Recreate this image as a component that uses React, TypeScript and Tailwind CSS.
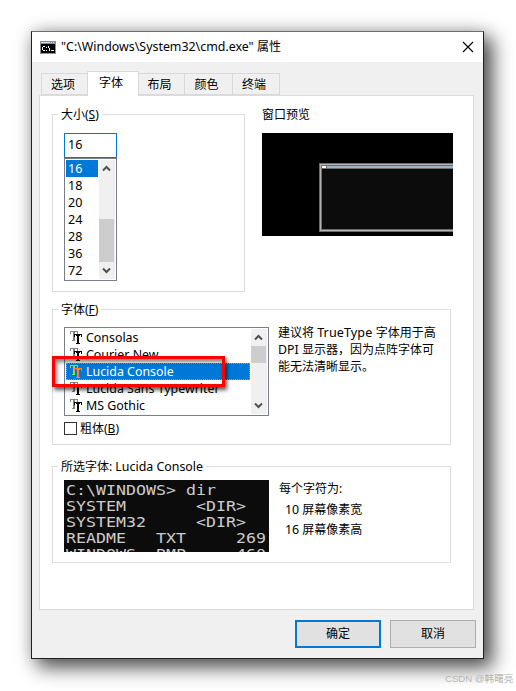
import type { ReactNode } from "react";

function Legend({ children }: { children: ReactNode }) {
  return (
    <div className="absolute left-[5px] -top-[9px] h-[18px] whitespace-nowrap bg-white px-[3px] leading-[18px]">
      {children}
    </div>
  );
}

function Latin({ children }: { children: ReactNode }) {
  return <span className="text-[12.4px]">{children}</span>;
}

function Chevron({ down = false }: { down?: boolean }) {
  return (
    <svg className="h-[17px] w-4 shrink-0" viewBox="0 0 16 17" fill="none" stroke="#505050" strokeWidth="2">
      <path d={down ? "M4 6.5 L7.5 10 L11 6.5" : "M4 10.5 L7.5 7 L11 10.5"} />
    </svg>
  );
}

function TrueTypeIcon({ selected = false }: { selected?: boolean }) {
  return (
    <svg className="h-[13px] w-3 shrink-0" viewBox="0 0 12 13" fill="none" shapeRendering="crispEdges">
      <path d="M0 0.5H8M0.5 0V3M7.5 0V3M3.5 1V10M4.5 1V10M2 9.5H5" stroke={selected ? "#7fe05a" : "#848484"} />
      <path
        d="M4 3.5H12M4 4.5H5M11 4.5H12M4.5 3V6M11.5 3V6M7.5 3V13M8.5 3V13M6 12.5H10M6 4.5H10"
        stroke={selected ? "#ff8226" : "#000000"}
      />
    </svg>
  );
}

const tabs = [
  { label: "选项", cls: "w-[47px] mt-[2px] h-[22px] bg-[#f0f0f0] border-r-0 pt-px" },
  { label: "字体", cls: "w-[52px] -ml-px h-[25px] bg-white border-b-0 relative z-10 pb-[2px]" },
  { label: "布局", cls: "w-[46px] mt-[2px] h-[22px] bg-[#f0f0f0] border-l-0 pt-px" },
  { label: "颜色", cls: "w-[48px] mt-[2px] h-[22px] bg-[#f0f0f0] border-l-0 pt-px" },
  { label: "终端", cls: "w-[47px] mt-[2px] h-[22px] bg-[#f0f0f0] border-l-0 pt-px" },
];

const sizes = [16, 18, 20, 24, 28, 36, 72];
const fonts = ["Consolas", "Courier New", "Lucida Console", "Lucida Sans Typewriter", "MS Gothic"];

const consoleText = `C:\\WINDOWS> dir
SYSTEM       <DIR>
SYSTEM32     <DIR>
README   TXT     269
WINDOWS  BMP     460`;

export default function App() {
  return (
    <div className="relative h-[691px] w-[516px] overflow-hidden bg-white pl-[31px] pt-[31px] font-['Noto_Sans','Noto_Sans_CJK_SC',sans-serif] text-[12px] text-black">
      <div className="flex h-[628px] w-[453px] flex-col border border-[#202020] border-t-[#6e6e6e] bg-[#f0f0f0] shadow-[8px_8px_18px_1px_rgba(0,0,0,0.64),0_0_16px_rgba(0,0,0,0.2)]">
        <header className="flex h-[30px] shrink-0 items-center bg-white pl-2">
          <svg className="h-[13px] w-4" viewBox="0 0 16 13" shapeRendering="crispEdges">
            <path fill="#8a9096" d="M0 0h16v13H0z" />
            <path fill="#d8dde2" d="M1 1h9v1H1zM11 1h1v1h-1zM13 1h1v1h-1z" />
            <path fill="#000" d="M1 3h14v9H1z" />
            <path stroke="#fff" fill="none" d="M5 5.5H3M2.5 6v3M3 9.5h2M6.5 6v1M6.5 9v1M8.5 5v2M9.5 7v3M11 9.5h3" />
          </svg>
          <span className="ml-[5px] text-[12.4px] leading-[18px]">
            "C:\Windows\System32\cmd.exe" <span className="text-[12px]">属性</span>
          </span>
          <svg className="ml-auto mr-[9px] h-3 w-3" viewBox="0 0 12 12" stroke="#000" fill="none" strokeWidth="1.1">
            <path d="M1 1 L11 11 M11 1 L1 11" />
          </svg>
        </header>

        <nav className="ml-[9px] mt-[9px] flex h-6 shrink-0">
          {tabs.map((t) => (
            <div key={t.label} className={`flex shrink-0 items-center justify-center border border-[#d9d9d9] pr-1 ${t.cls}`}>
              {t.label}
            </div>
          ))}
        </nav>

        <main className="ml-[7px] h-[515px] w-[435px] shrink-0 border border-[#dcdcdc] bg-white pl-3 pt-[18px]">
          <div className="flex">
            <section className="relative h-[178px] w-[193px] border border-[#dcdcdc] pl-[11px] pt-[18px]">
              <Legend>大小(<u>S</u>)</Legend>
              <div className="h-[25px] w-[53px] border border-[#0078d7] pl-[3px] text-[12.6px] leading-[22px]">16</div>
              <div className="flex h-[123px] w-[53px] justify-between border border-[#7a7f87] p-px">
                <ul className="w-8 text-[12.6px]">
                  {sizes.map((s) => (
                    <li key={s} className={`h-[17px] pl-[2px] leading-[17px] ${s === 16 ? "bg-[#0078d7] text-white" : ""}`}>
                      {s}
                    </li>
                  ))}
                </ul>
                <div className="flex w-4 flex-col bg-[#f0f0f0]">
                  <Chevron />
                  <div className="mt-[42px] h-[43px] w-[15px] bg-[#cdcdcd]" />
                  <div className="mt-auto flex"><Chevron down /></div>
                </div>
              </div>
            </section>
            <section className="ml-[17px] -mt-[9px]">
              <h2 className="h-7 leading-[20px]">窗口预览</h2>
              <div className="h-[103px] w-[191px] overflow-hidden bg-black pl-[57px] pt-[30px]">
                <div className="h-[69px] w-[150px] border border-[#6d6d6d] bg-[#b4b4b4] p-px">
                  <div className="h-full border border-[#6d6d6d] bg-[#0c0c0c]">
                    <div className="flex h-[3px] border-b border-[#6d6d6d] bg-[#99b4d1]">
                      <div className="w-[5px] border-r border-[#6d6d6d] bg-white" />
                    </div>
                  </div>
                </div>
              </div>
            </section>
          </div>

          <section className="relative mt-[17px] h-[136px] w-[399px] border border-[#dcdcdc] pl-[11px] pt-[17px]">
            <Legend>字体(<u>F</u>)</Legend>
            <div className="flex">
              <div className="flex h-[89px] w-[205px] justify-between border border-[#7a7f87] p-px">
                <ul className="w-[184px] text-[12.4px]">
                  {fonts.map((f, i) => (
                    <li
                      key={f}
                      className={`flex h-[17px] items-center pl-[4px] leading-[17px] ${
                        i === 2 ? "bg-[#0078d7] text-white outline-1 -outline-offset-1 outline-dotted outline-[#ff8728]" : ""
                      }`}
                    >
                      <TrueTypeIcon selected={i === 2} />
                      <span className="ml-1 whitespace-nowrap">{f}</span>
                    </li>
                  ))}
                </ul>
                <div className="flex w-4 flex-col bg-[#f0f0f0]">
                  <Chevron />
                  <div className="h-[17px] w-[15px] bg-[#cdcdcd]" />
                  <div className="mt-auto flex"><Chevron down /></div>
                </div>
              </div>
              <p className="ml-[9px] -mt-[3px] whitespace-nowrap leading-[17px]">
                建议将 <span className="text-[12.6px] tracking-[0.1px]">TrueType </span>字体用于高<br />
                <Latin>DPI </Latin>显示器，因为点阵字体可<br />
                能无法清晰显示。
              </p>
            </div>
            <div className="mt-[3px] flex items-center leading-[18px]">
              <span className="mr-[3px] h-[13px] w-[13px] border border-[#333]" />
              <span className="mt-px">粗体(<u>B</u>)</span>
            </div>
            <div className="absolute -left-px top-[46px] h-[31px] w-[173px] border-[3px] border-[#fe0000] shadow-[2px_3px_4px_rgba(0,0,0,0.65),inset_2px_3px_4px_rgba(0,0,0,0.5)]" />
          </section>

          <section className="relative mt-[21px] flex h-[97px] w-[399px] border border-[#dcdcdc] pl-[11px] pt-[13px]">
            <Legend>所选字体: <Latin>Lucida Console</Latin></Legend>
            <div className="h-[72px] w-[205px] overflow-hidden bg-[#0c0c0c] pl-[2px]">
              <pre className="mt-[2px] w-[176px] origin-left scale-x-[1.145] font-['DejaVu_Sans_Mono',monospace] text-[14.5px] leading-[16px] text-[#cccccc]">
                {consoleText}
              </pre>
            </div>
            <div className="ml-[10px] -mt-px leading-[20.5px]">
              <p>每个字符为:</p>
              <p className="pl-[6px]"><Latin>10</Latin> 屏幕像素宽</p>
              <p className="pl-[6px]"><Latin>16</Latin> 屏幕像素高</p>
            </div>
          </section>
        </main>

        <footer className="flex pl-[263px] pt-[10px]">
          <button className="h-7 w-[86px] border-2 border-[#0078d7] bg-[#e1e1e1]">确定</button>
          <button className="ml-[9px] h-7 w-[86px] border border-[#adadad] bg-[#e1e1e1]">取消</button>
        </footer>
      </div>
      <div className="absolute left-[445px] top-[671px] whitespace-nowrap font-['Liberation_Sans','Noto_Sans_CJK_SC',sans-serif] text-[9.6px] leading-4 text-[#b4b4b4]">
        CSDN @韩曙亮
      </div>
    </div>
  );
}
